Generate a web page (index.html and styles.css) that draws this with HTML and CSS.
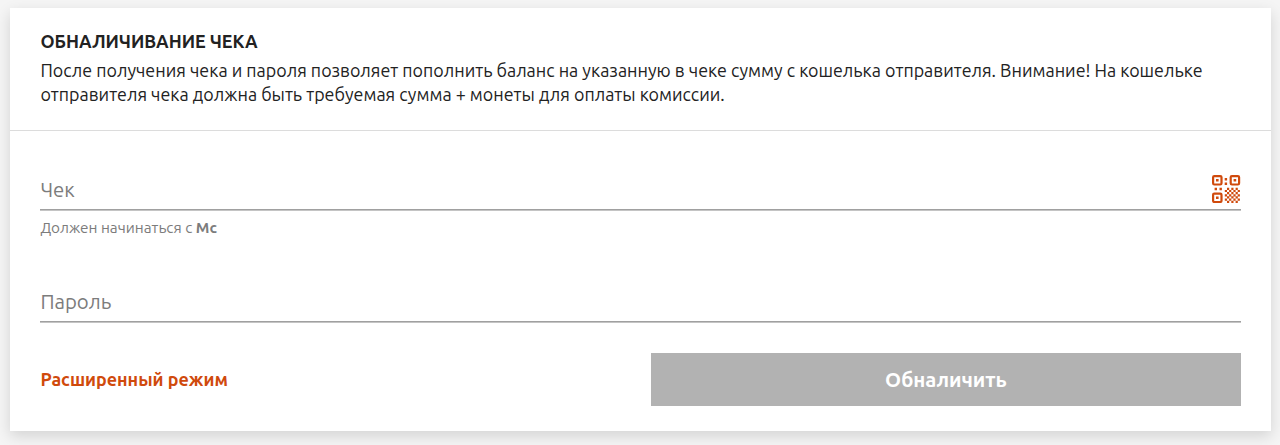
FILE: index.html
```html
<!DOCTYPE html>
<html lang="ru">

<head>
    <meta charset="UTF-8">
    <meta name="viewport" content="width=device-width, initial-scale=1.0">
    <title>Обналичивание чека</title>
    <link rel="stylesheet" href="styles.css">
</head>

<body>
    <div class="card">
        <div class="card-header">
            <h1>Обналичивание чека</h1>
            <p>После получения чека и пароля позволяет пополнить баланс на указанную в чеке сумму с кошелька отправителя. Внимание! На кошельке<br>отправителя чека должна быть требуемая сумма + монеты для оплаты комиссии.</p>
        </div>
        <form class="card-body">
            <div class="field">
                <input type="text" placeholder="Чек" aria-label="Чек">
                <svg class="qr" width="29" height="28" viewBox="0 0 29 28">
                    <g fill="none" stroke="#d04a0c" stroke-width="2.2">
                        <rect x="1.1" y="1.1" width="8.4" height="8.4" rx="1.2"/>
                        <rect x="18.7" y="1.1" width="8.4" height="8.4" rx="1.2"/>
                        <rect x="1.1" y="18.6" width="8.4" height="8.4" rx="1.2"/>
                    </g>
                    <g fill="#d04a0c">
                        <path d="M4 4h2.6v2.6H4zM21.6 4h2.6v2.6h-2.6zM4 21.5h2.6v2.6H4z"/>
                        <path d="M12.7 3h2.4v2.4h-2.4zM12.7 7.6h2.4V10h-2.4zM2.6 12.8H5v2.4H2.6zM7.5 12.8h2.4v2.4H7.5z"/>
                    </g>
                    <!-- checkered corner -->
                    <g fill="none" stroke="#d04a0c" stroke-width="2.2" stroke-dasharray="2.2 2.1">
                        <path d="M15 13.9h12M12.8 16h15.2M15 18.1h12M12.8 20.3h15.2M15 22.4h12M12.8 24.6h15.2M15 26.8h12"/>
                    </g>
                </svg>
            </div>
            <div class="hint">Должен начинаться с <b>Mc</b></div>
            <div class="field">
                <input type="text" placeholder="Пароль" aria-label="Пароль">
            </div>
            <div class="actions">
                <a class="mode">Расширенный режим</a>
                <button class="submit" type="button">Обналичить</button>
            </div>
        </form>
    </div>
</body>

</html>
```
FILE: styles.css
```css
* {
    box-sizing: border-box;
}

body {
    margin: 0;
    padding: 8px 9px 14px 10px;
    background-color: #f5f5f5;
    color: #222;
    font-family: Ubuntu, "Noto Sans", sans-serif;
    overflow: hidden;
}

.card {
    height: 423px;
    background-color: white;
    box-shadow: 0 5px 14px rgba(0, 0, 0, 0.14);
}

.card-header {
    height: 123px;
    padding: 21px 30px 0 30.4px;
    border-bottom: 1px solid #dcdcdc;
}

h1 {
    margin: 0;
    font-size: 17.95px;
    line-height: 24px;
    font-weight: bold;
    text-transform: uppercase;
}

p {
    margin: 5px 0 0;
    font-size: 17.89px;
    line-height: 24px;
    white-space: nowrap;
}

.card-body {
    padding: 38px 30px 0;
}

.field {
    display: flex;
    align-items: center;
    height: 41px;
    border-bottom: 1px solid #a0a0a0;
    box-shadow: 0 1px #c4c4c4;
}

.field input {
    flex: 1;
    padding: 0 0 0 0.4px;
    border: none;
    outline: none;
    background: none;
    font-family: inherit;
    font-size: 20.4px;
}

.field input::placeholder {
    color: #7c7c7c;
    opacity: 1;
}

.hint {
    height: 71px;
    padding: 8px 0 0 0.4px;
    color: #7c7c7c;
    font-size: 15.3px;
    line-height: 20px;
}

.actions {
    display: flex;
    justify-content: space-between;
    align-items: center;
    margin-top: 31px;
}

.mode {
    padding: 0 0 2px 0.4px;
    color: #d04a0c;
    font-size: 17.9px;
    font-weight: bold;
}

.submit {
    width: 590px;
    height: 53px;
    border: none;
    background-color: #b2b2b2;
    color: white;
    font-family: inherit;
    font-size: 20.4px;
    font-weight: bold;
}
```
